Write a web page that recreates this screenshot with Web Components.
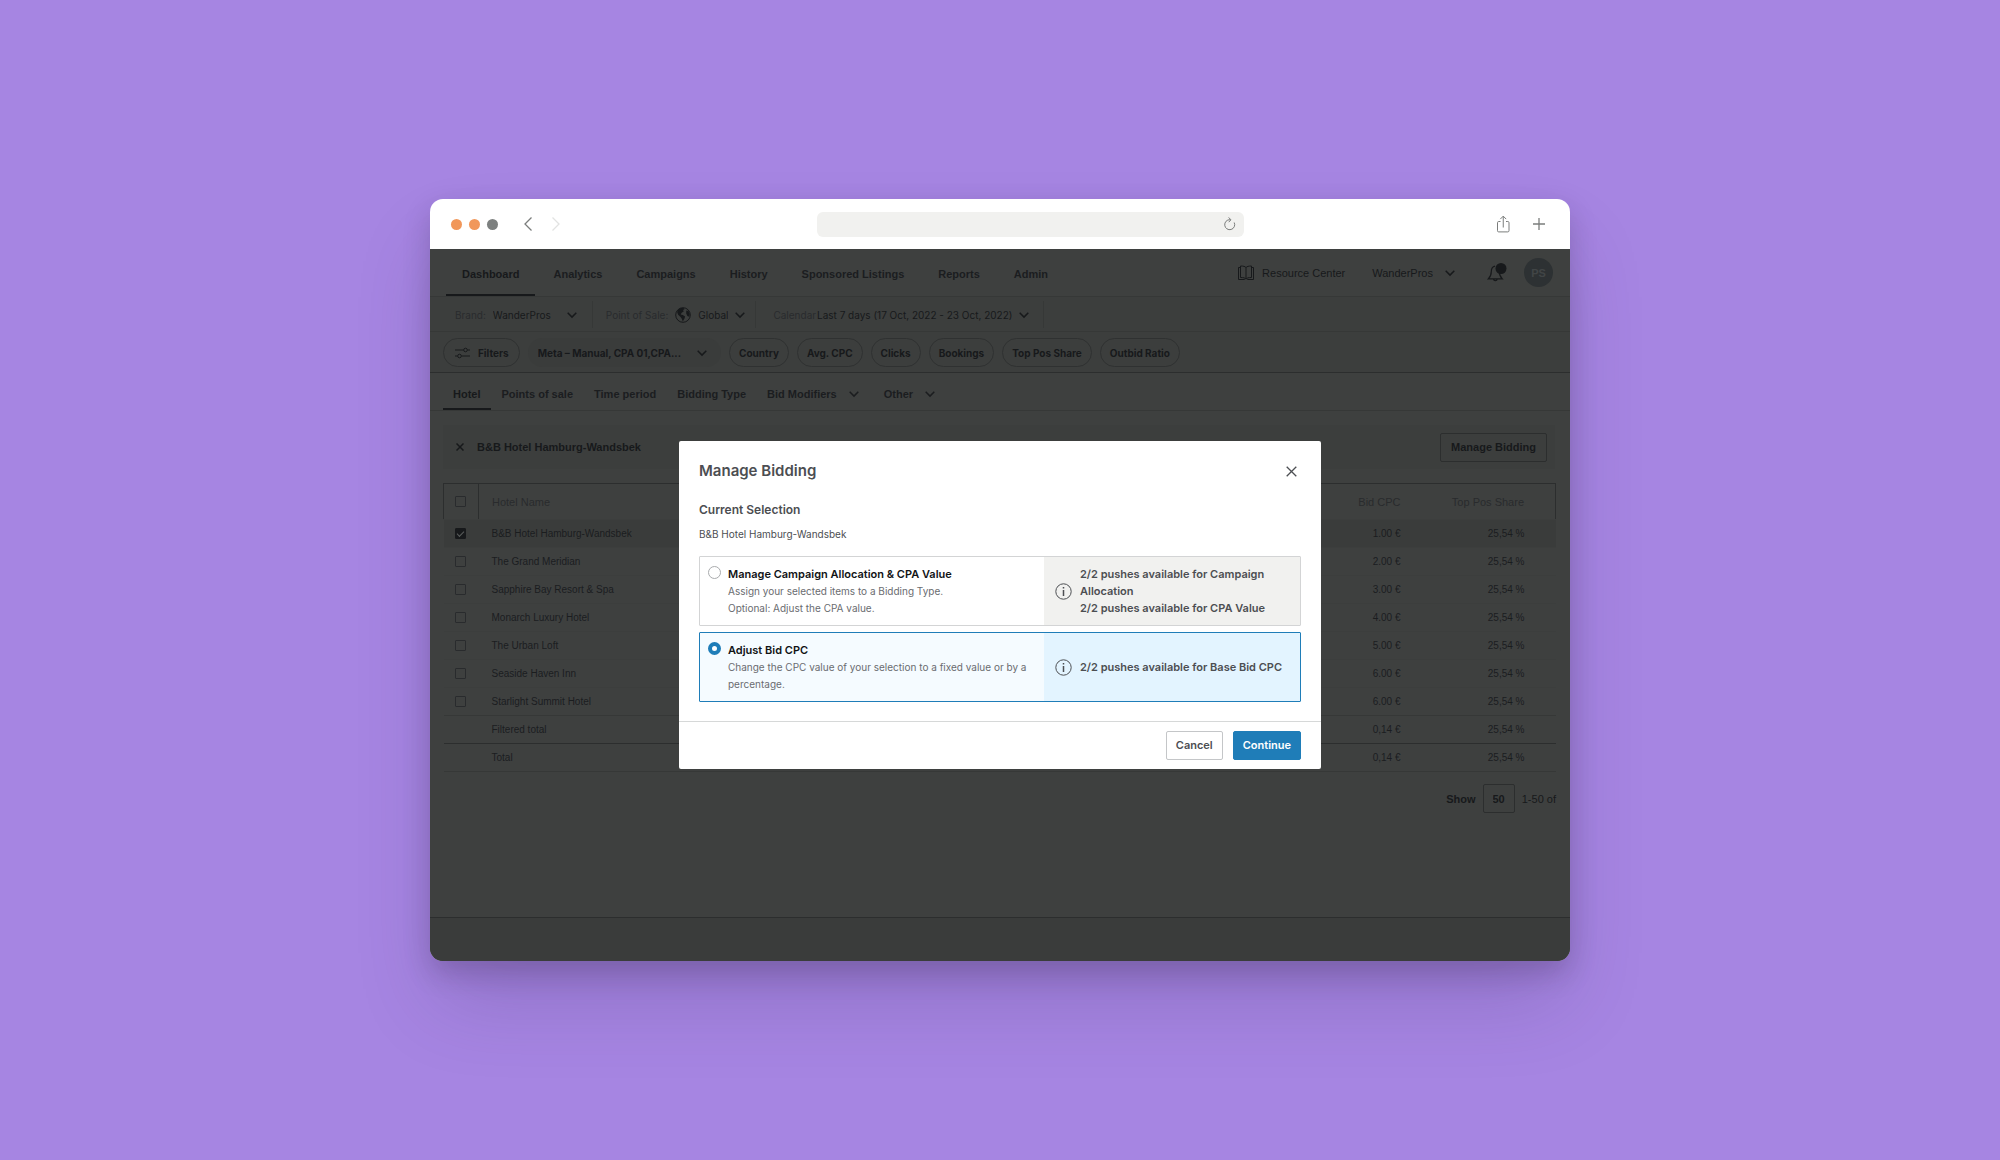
<!DOCTYPE html>
<html lang="en">
<head>
<meta charset="utf-8">
<meta name="viewport" content="width=device-width, initial-scale=1">
<title>Manage Bidding</title>
<style>
  :root {
    --page: #a685e2;
    --app: #3e403f;
    --bar: #3c3e3d;
    --shade: #3a3c3b;
    --line: #363837;
    --line-strong: #2c2e2e;
    --text: #17191b;
    --text-soft: #1b1d1f;
    --text-muted: #292b2d;
    --ui: Inter, "Liberation Sans", sans-serif;
    --arial: "Liberation Sans", Arial, sans-serif;
  }
  body {
    margin: 0;
    min-height: 100vh;
    display: grid;
    place-items: center;
    background: var(--page);
    font: 11px/16px var(--arial);
    color: var(--text);
  }
</style>
</head>
<body>
<browser-window>
  <bidding-app>
    <nav-bar></nav-bar>
    <scope-bar></scope-bar>
    <filter-bar></filter-bar>
    <tab-bar></tab-bar>
    <selection-bar>B&amp;B Hotel Hamburg-Wandsbek</selection-bar>
    <hotel-table></hotel-table>
    <page-size></page-size>
    <modal-dialog slot="modal">
      <span slot="title">Manage Bidding</span>
      <span slot="subtitle">Current Selection</span>
      <span slot="selection">B&amp;B Hotel Hamburg-Wandsbek</span>
      <bid-option>
        <span slot="title">Manage Campaign Allocation &amp; CPA Value</span>
        Assign your selected items to a Bidding Type.<br>Optional: Adjust the CPA value.
        <span slot="info">2/2 pushes available for Campaign Allocation<br>2/2 pushes available for CPA Value</span>
      </bid-option>
      <bid-option checked>
        <span slot="title">Adjust Bid CPC</span>
        Change the CPC value of your selection to a fixed value or by a percentage.
        <span slot="info">2/2 pushes available for Base Bid CPC</span>
      </bid-option>
    </modal-dialog>
  </bidding-app>
</browser-window>

<script>
// Rules every shadow root needs
const BASE = `
  :host, *, *::after { box-sizing: border-box; }
  button, select, input { font: inherit; color: inherit; margin: 0; }
  button { border: 0; padding: 0; background: none; cursor: pointer; }
  a { color: inherit; text-decoration: none; }
  svg { display: block; flex: none; fill: none; stroke: currentColor; }
`;

const CHEVRON = `<svg width="10" height="10" viewBox="0 0 10 10" stroke-width="1.5" aria-hidden="true"><path d="M.7 2.8 5 7.1l4.3-4.3"/></svg>`;

class BaseElement extends HTMLElement {
  constructor() {
    super();
    this.attachShadow({ mode: "open" });
  }
  connectedCallback() {
    this.shadowRoot.innerHTML = `<style>${BASE}${this.styles()}</style>${this.markup()}`;
  }
}

/* ---------- browser frame ---------- */
class BrowserWindow extends BaseElement {
  styles() {
    return `
      :host {
        display: block;
        width: 57%;
        min-width: 1100px;
        border-radius: 13px;
        overflow: hidden;
        background: #fff;
        box-shadow: 0 12px 28px rgba(30, 20, 40, .2), 0 45px 80px -8px rgba(60, 40, 100, .22);
      }
      header {
        display: grid;
        grid-template-columns: 6fr 7fr 5fr;
        align-items: center;
        height: 50px;
        padding: 0 21px;
        color: #7b7d7c;
      }
      .left, .right { display: flex; align-items: center; }
      .right { justify-content: flex-end; gap: 20px; padding-right: 3px; }
      .dot { width: 11px; height: 11px; border-radius: 50%; margin-right: 7px; background: #f1975a; }
      .dot.off { background: #7d807f; }
      .back { margin-left: 18px; }
      .forward { margin-left: 18px; color: #e2e3e2; }
      .url {
        display: flex;
        align-items: center;
        height: 25px;
        padding: 0 8px;
        border-radius: 6px;
        background: #f1f1ef;
      }
      input { flex: 1; border: 0; background: none; outline: 0; }
    `;
  }
  markup() {
    return `
      <header>
        <div class="left">
          <span class="dot"></span><span class="dot"></span><span class="dot off"></span>
          <button class="back" aria-label="Back"><svg width="10" height="14" viewBox="0 0 10 14" stroke-width="1.3"><path d="M8.5.5 2 7l6.5 6.5"/></svg></button>
          <button class="forward" aria-label="Forward"><svg width="10" height="14" viewBox="0 0 10 14" stroke-width="1.3"><path d="M1.5.5 8 7l-6.5 6.5"/></svg></button>
        </div>
        <div class="url">
          <input type="text" aria-label="Address">
          <button aria-label="Reload"><svg width="13" height="14" viewBox="0 0 13 14"><path d="M7 2.7A5 5 0 1 0 11.2 5.5M5.5.4 8 2.8 5.7 5.2"/></svg></button>
        </div>
        <div class="right">
          <button aria-label="Share"><svg width="17" height="18" viewBox="0 0 17 18"><path d="M5.5 6.5H3.7a1.2 1.2 0 0 0-1.2 1.2v8a1.2 1.2 0 0 0 1.2 1.2h9.1a1.2 1.2 0 0 0 1.2-1.2v-8a1.2 1.2 0 0 0-1.2-1.2H11M8.250 12.5V1.2M5.3 4.1l2.950-2.950L11.2 4.1"/></svg></button>
          <button aria-label="New tab"><svg width="14" height="14" viewBox="0 0 14 14" stroke-width="1.3"><path d="M7 1v12M1 7h12"/></svg></button>
        </div>
      </header>
      <slot></slot>
    `;
  }
}

/* ---------- dimmed application behind the modal ---------- */
class BiddingApp extends BaseElement {
  styles() {
    return `
      :host { display: block; position: relative; background: var(--app); }
      main { padding-bottom: 104px; }
      footer { height: 44px; border-top: 1px solid var(--line-strong); background: #3a3c3b; }
      .overlay { position: absolute; inset: 0; display: grid; place-items: center; }
    `;
  }
  markup() {
    return `
      <main><slot></slot></main>
      <footer></footer>
      <div class="overlay"><slot name="modal"></slot></div>
    `;
  }
}

/* select with a chevron drawn over its right edge */
class DropDown extends BaseElement {
  styles() {
    return `
      :host { display: inline-flex; align-items: center; gap: 7px; }
      label { color: var(--text-muted); }
      .box { display: grid; align-items: center; }
      select {
        grid-area: 1 / 1;
        appearance: none;
        field-sizing: content;
        border: 0;
        background: none;
        outline: 0;
        height: 16px;
        line-height: 16px;
        padding: 0 var(--arrow-room, 17px) 0 0;
      }
      svg { grid-area: 1 / 1; justify-self: end; pointer-events: none; }
    `;
  }
  markup() {
    const label = this.getAttribute("label");
    const value = this.getAttribute("value");
    const name = this.getAttribute("name") || value;
    return `
      ${label ? `<label for="field">${label}</label>` : ""}
      <slot></slot>
      <div class="box">
        <select id="field" ${label ? "" : `aria-label="${name}"`}><option>${value}</option></select>
        ${CHEVRON}
      </div>
    `;
  }
}

class NavBar extends BaseElement {
  styles() {
    return `
      :host {
        display: flex;
        justify-content: space-between;
        height: 48px;
        padding: 0 17px 0 16px;
        border-bottom: 1px solid var(--line);
      }
      nav { display: flex; gap: 2px; font-weight: bold; color: var(--text-soft); }
      nav a { display: flex; align-items: center; padding: 5px 16px 0; border-bottom: 2px solid transparent; }
      nav a.active { color: var(--text); border-color: var(--text); }
      .tools { display: flex; align-items: center; }
      .resource { display: flex; align-items: center; gap: 7px; margin-right: 27px; }
      drop-down { --arrow-room: 22px; }
      .bell { margin: 0 17px 0 32px; }
      .bell circle { fill: var(--text); stroke: none; }
      .avatar {
        display: grid;
        place-items: center;
        width: 29px;
        height: 29px;
        border-radius: 50%;
        background: #2d3133;
        color: #414546;
        font-weight: bold;
      }
    `;
  }
  markup() {
    const links = ["Dashboard", "Analytics", "Campaigns", "History", "Sponsored Listings", "Reports", "Admin"];
    return `
      <nav>${links.map((l, i) => `<a href="#"${i ? "" : ' class="active"'}>${l}</a>`).join("")}</nav>
      <div class="tools">
        <a class="resource" href="#">
          <svg width="18" height="16" viewBox="0 0 18 16" aria-hidden="true"><path d="M9 2.6C8 1.4 6.5 1 3.5 1v11.5c3 0 4.5.4 5.5 1.6 1-1.2 2.5-1.6 5.5-1.6V1c-3 0-4.5.4-5.5 1.6zM9 2.6v11.5M3.5 2.5h-2v12h6.2M14.5 2.5h2v12h-6.2"/></svg>
          Resource Center
        </a>
        <drop-down name="Account" value="WanderPros"></drop-down>
        <button class="bell" aria-label="Notifications"><svg width="20" height="20" viewBox="0 0 20 20" stroke-width="1.2"><path d="M8 3.2C5.2 3.8 4.3 6 4.3 8.5c0 4-1 5.4-3 7.4h14c-2-2-3-3.4-3-7.4M6.5 16.2c.3 2 3.4 2 3.7 0"/><circle cx="14" cy="5.5" r="5.5"/></svg></button>
        <span class="avatar">PS</span>
      </div>
    `;
  }
}

class ScopeBar extends BaseElement {
  styles() {
    return `
      :host {
        display: flex;
        height: 35px;
        padding: 4px 13px 3px;
        border-bottom: 1px solid var(--line);
        background: var(--bar);
        font-family: var(--ui);
        font-size: 10px;
        color: var(--text);
      }
      drop-down { padding: 0 10px 0 13px; border-right: 1px solid var(--line); }
      drop-down:first-of-type { padding: 0 15px 0 12px; --arrow-room: 26px; }
      drop-down:last-of-type { padding: 0 14px 0 17px; gap: 1px; }
    `;
  }
  markup() {
    return `
      <drop-down label="Brand:" value="WanderPros"></drop-down>
      <drop-down label="Point of Sale:" value="Global">
        <svg width="16" height="16" viewBox="0 0 16 16" aria-hidden="true"><circle cx="8" cy="8" r="7.3"/><path fill="currentColor" stroke="none" d="M3.3 2.5C4.8 1.2 6.6.8 8.6 1l.9 1.3-1.4.8.6 1.4-2 1.3-1 1.7 2.1.6 2.3 1.5-.6 2-1.7 2.9-1-2.7-1.5-2-2.2-2.1-1-2.7zM11.3 3.5l2.2.5 1.3 2.9-.6 2.9-1.8-.8-1.2-2.4z"/></svg>
      </drop-down>
      <drop-down label="Calendar" value="Last 7 days (17 Oct, 2022 - 23 Oct, 2022)"></drop-down>
    `;
  }
}

class FilterBar extends BaseElement {
  styles() {
    return `
      :host {
        display: flex;
        align-items: center;
        gap: 8px;
        height: 41px;
        padding: 1px 13px 0;
        border-bottom: 1px solid var(--line-strong);
        background: var(--bar);
        font-family: var(--ui);
        font-size: 10px;
        font-weight: 700;
      }
      button, drop-down { height: 29px; padding: 0 9px; border-radius: 15px; }
      button { border: 1px solid #2f3131; }
      .filters { display: flex; align-items: center; gap: 8px; padding: 0 10px 0 11px; }
      drop-down { --arrow-room: 26px; padding: 0 14px 0 10px; background: var(--shade); }
    `;
  }
  markup() {
    const chips = ["Country", "Avg. CPC", "Clicks", "Bookings", "Top Pos Share", "Outbid Ratio"];
    return `
      <button class="filters">
        <svg width="15" height="12" viewBox="0 0 15 12" aria-hidden="true"><path d="M0 3h8.5M12.5 3H15M0 9h2.5M6.5 9H15"/><circle cx="10.5" cy="3" r="1.8"/><circle cx="4.5" cy="9" r="1.8"/></svg>
        Filters
      </button>
      <drop-down name="Campaign" value="Meta – Manual, CPA 01,CPA..."></drop-down>
      ${chips.map((c) => `<button>${c}</button>`).join("")}
    `;
  }
}

class TabBar extends BaseElement {
  styles() {
    return `
      :host {
        display: flex;
        gap: 1px;
        height: 38px;
        padding: 0 13px;
        border-bottom: 1px solid var(--line);
        font-weight: bold;
        color: var(--text-soft);
      }
      a, button { display: flex; align-items: center; gap: 12px; padding: 6px 10px 0; border-bottom: 2px solid transparent; }
      .active { color: var(--text); border-color: var(--text); }
      button { padding-right: 14px; }
    `;
  }
  markup() {
    return `
      <a href="#" class="active">Hotel</a>
      <a href="#">Points of sale</a>
      <a href="#">Time period</a>
      <a href="#">Bidding Type</a>
      <button>Bid Modifiers ${CHEVRON}</button>
      <button>Other ${CHEVRON}</button>
    `;
  }
}

class SelectionBar extends BaseElement {
  styles() {
    return `
      :host {
        display: flex;
        align-items: center;
        height: 44px;
        margin: 14px 15px 14px 13px;
        padding: 0 8px 0 13px;
        background: var(--bar);
        font-weight: bold;
      }
      .name { flex: 1; padding-left: 13px; }
      .manage { height: 29px; padding: 0 10px; border: 1px solid var(--line-strong); border-radius: 2px; }
    `;
  }
  markup() {
    return `
      <button aria-label="Clear selection"><svg width="8" height="8" viewBox="0 0 8 8" stroke-width="1.5"><path d="m.5.5 7 7M7.5.5l-7 7"/></svg></button>
      <span class="name"><slot></slot></span>
      <button class="manage">Manage Bidding</button>
    `;
  }
}

class HotelTable extends BaseElement {
  styles() {
    return `
      :host { display: block; padding: 0 14px 0 13px; font-size: 10px; color: var(--text-soft); }
      table { width: 100%; border-collapse: collapse; table-layout: fixed; }
      th, td { height: 28px; padding: 0; font-weight: normal; text-align: left; border-bottom: 1px solid #3c3e3d; }
      thead tr { border: 1px solid var(--line-strong); }
      th { height: 36px; font-size: 11px; color: var(--text-muted); }
      .check { width: 35px; padding-left: 11px; }
      th.check { border-right: 1px solid var(--line-strong); }
      .name { padding-left: 13px; }
      .cpc { width: 120px; text-align: right; }
      .share { width: 155px; padding-right: 31px; text-align: right; }
      .selected { background: var(--shade); }
      .rule td { border-color: var(--line); }
      .rule-strong td { border-color: var(--line-strong); }
      input {
        appearance: none;
        display: block;
        width: 11px;
        height: 11px;
        border: 1px solid var(--text-muted);
        border-radius: 1px;
      }
      input:checked { background: var(--text); border-color: var(--text); }
      /* tick over the filled box */
      input:checked::after {
        content: "";
        display: block;
        width: 7px;
        height: 4px;
        margin: 2px auto 0;
        border: solid #5a5d5c;
        border-width: 0 0 1px 1px;
        rotate: -45deg;
      }
    `;
  }
  markup() {
    const rows = [
      ["B&amp;B Hotel Hamburg-Wandsbek", "1.00 €", "selected"],
      ["The Grand Meridian", "2.00 €", ""],
      ["Sapphire Bay Resort &amp; Spa", "3.00 €", ""],
      ["Monarch Luxury Hotel", "4.00 €", ""],
      ["The Urban Loft", "5.00 €", ""],
      ["Seaside Haven Inn", "6.00 €", ""],
      ["Starlight Summit Hotel", "6.00 €", "rule"],
      ["Filtered total", "0,14 €", "rule-strong"],
      ["Total", "0,14 €", "rule"],
    ];
    return `
      <table>
        <thead>
          <tr>
            <th class="check"><input type="checkbox" aria-label="Select all"></th>
            <th class="name">Hotel Name</th>
            <th class="cpc">Bid CPC</th>
            <th class="share">Top Pos Share</th>
          </tr>
        </thead>
        <tbody>
          ${rows.map(([name, cpc, cls], i) => `
          <tr class="${cls}">
            <td class="check">${i < 7 ? `<input type="checkbox" aria-label="${name}"${i ? "" : " checked"}>` : ""}</td>
            <td class="name">${name}</td>
            <td class="cpc">${cpc}</td>
            <td class="share">25,54 %</td>
          </tr>`).join("")}
        </tbody>
      </table>
    `;
  }
}

class PageSize extends BaseElement {
  styles() {
    return `
      :host { display: flex; justify-content: flex-end; align-items: center; gap: 7px; padding: 12px 14px 0; }
      label, select { font-weight: bold; }
      select {
        appearance: none;
        field-sizing: content;
        height: 29px;
        padding: 0 9px;
        border: 1px solid var(--line-strong);
        border-radius: 2px;
        background: none;
      }
    `;
  }
  markup() {
    return `
      <label for="size">Show</label>
      <select id="size"><option>50</option></select>
      <span>1-50 of</span>
    `;
  }
}

/* ---------- modal ---------- */
class ModalDialog extends BaseElement {
  styles() {
    return `
      :host {
        display: block;
        width: 642px;
        border-radius: 2px;
        background: #fff;
        font: 10px/17px var(--ui);
        color: #4c4e52;
      }
      .body { padding: 19px 20px; }
      header { display: flex; align-items: center; justify-content: space-between; padding-right: 4px; }
      h2 { margin: 0; font-size: 15px; line-height: 22px; font-weight: 600; }
      h3 { margin: 19px 0 8px; font-size: 12px; line-height: 17px; font-weight: 600; }
      p { margin: 0 0 13px; }
      .options { display: grid; gap: 6px; }
      footer { display: flex; justify-content: flex-end; gap: 10px; padding: 9px 20px; border-top: 1px solid #d6d8d8; }
      footer button { height: 29px; padding: 0 9px; border: 1px solid #c4c6c8; border-radius: 2px; font-size: 11px; font-weight: 600; }
      footer .primary { background: #1f7db8; border-color: #1f7db8; color: #fff; }
    `;
  }
  markup() {
    return `
      <div class="body" role="dialog" aria-labelledby="title">
        <header>
          <h2 id="title"><slot name="title"></slot></h2>
          <button aria-label="Close"><svg width="11" height="11" viewBox="0 0 11 11" stroke-width="1.3"><path d="m.7.7 9.6 9.6M10.3.7.7 10.3"/></svg></button>
        </header>
        <h3><slot name="subtitle"></slot></h3>
        <p><slot name="selection"></slot></p>
        <div class="options"><slot></slot></div>
      </div>
      <footer>
        <button>Cancel</button>
        <button class="primary">Continue</button>
      </footer>
    `;
  }
}

class BidOption extends BaseElement {
  styles() {
    return `
      :host {
        display: grid;
        grid-template-columns: 1fr 256px;
        min-height: 70px;
        border: 1px solid #d3d4d5;
        border-radius: 1px;
        color: #6a6c70;
      }
      :host([checked]) { border-color: #1f7db8; background: #f5fbff; }
      label { display: flex; gap: 7px; padding: 9px 9px 8px 8px; }
      input {
        appearance: none;
        flex: none;
        width: 13px;
        height: 13px;
        border: 1px solid #a9abad;
        border-radius: 50%;
        background: #fff;
      }
      input:checked { border: 4px solid #1f7db8; }
      strong { display: block; font-size: 11px; font-weight: 600; color: #111315; }
      aside {
        display: flex;
        align-items: center;
        gap: 8px;
        padding: 0 11px;
        background: #f1f1ef;
        color: #4c4e52;
        font-size: 11px;
        font-weight: 600;
      }
      :host([checked]) aside { background: #e3f4ff; }
    `;
  }
  markup() {
    return `
      <label>
        <input type="radio" name="option"${this.hasAttribute("checked") ? " checked" : ""}>
        <span><strong><slot name="title"></slot></strong><slot></slot></span>
      </label>
      <aside>
        <svg width="17" height="17" viewBox="0 0 17 17" aria-hidden="true"><circle cx="8.5" cy="8.5" r="7.7"/><path stroke-width="1.5" d="M8.5 7v6M8.5 4v1.5"/></svg>
        <slot name="info"></slot>
      </aside>
    `;
  }
}

customElements.define("drop-down", DropDown);
customElements.define("bid-option", BidOption);
customElements.define("modal-dialog", ModalDialog);
customElements.define("page-size", PageSize);
customElements.define("hotel-table", HotelTable);
customElements.define("selection-bar", SelectionBar);
customElements.define("tab-bar", TabBar);
customElements.define("filter-bar", FilterBar);
customElements.define("scope-bar", ScopeBar);
customElements.define("nav-bar", NavBar);
customElements.define("bidding-app", BiddingApp);
customElements.define("browser-window", BrowserWindow);
</script>
</body>
</html>
